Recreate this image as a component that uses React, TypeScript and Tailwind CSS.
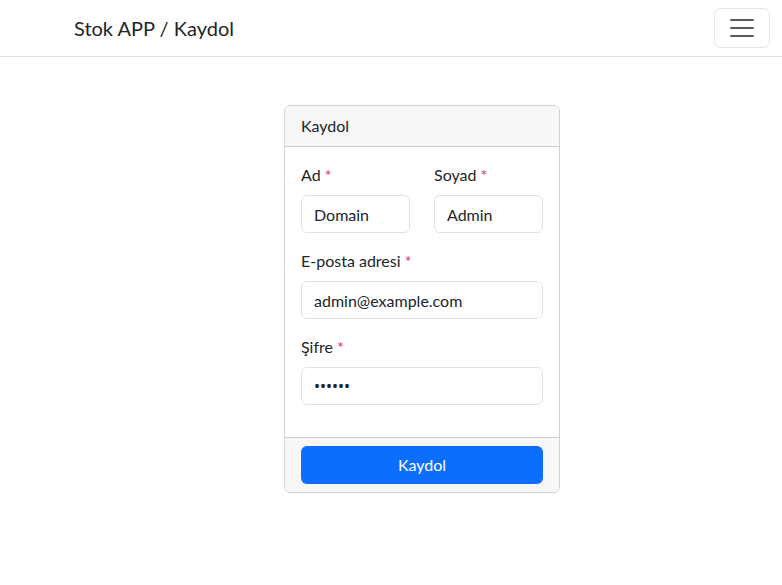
import React from "react";

function Label({ text }: { text: string }) {
  return (
    <label className="mb-2 block leading-6 text-[16px] text-[#212529]">
      {text} <span className="text-[#dc3545]">*</span>
    </label>
  );
}

function Input({ value, type = "text" }: { value: string; type?: string }) {
  return (
    <input
      type={type}
      defaultValue={value}
      className={
        "block h-[38px] w-full rounded-[6px] border border-[#dee2e6] bg-white px-3 text-[16px] text-[#212529] outline-none " +
        (type === "password" ? "font-['Noto_Sans',sans-serif]" : "")
      }
    />
  );
}

export default function App() {
  return (
    <div
      className="min-h-[585px] bg-white text-[#212529]"
      style={{ fontFamily: 'Lato, "Noto Sans", sans-serif' }}
    >
      <nav className="flex h-[57px] items-center justify-between border-b border-[#dee2e6] pl-[74px] pr-3">
        <span className="text-[20px] leading-[30px] text-[#212529]">Stok APP / Kaydol</span>
        <button className="flex h-[40px] w-[56px] items-center justify-center rounded-[6px] border border-[rgba(0,0,0,0.1)]">
          <svg width="30" height="30" viewBox="0 0 30 30">
            <path
              d="M4 7h22M4 15h22M4 23h22"
              stroke="rgba(33,37,41,0.75)"
              strokeWidth="2"
              strokeLinecap="round"
            />
          </svg>
        </button>
      </nav>
      <div className="ml-[284px] mt-[48px] w-[276px] overflow-hidden rounded-[6px] border border-[rgba(0,0,0,0.175)]">
        <div className="h-[41px] border-b border-[rgba(0,0,0,0.175)] bg-[#f7f7f7] px-4 leading-[40px] text-[16px]">
          Kaydol
        </div>
        <div className="p-4">
          <div className="mb-4 grid grid-cols-2 gap-6">
            <div>
              <Label text="Ad" />
              <Input value="Domain" />
            </div>
            <div>
              <Label text="Soyad" />
              <Input value="Admin" />
            </div>
          </div>
          <div className="mb-4">
            <Label text="E-posta adresi" />
            <Input value="admin@example.com" type="email" />
          </div>
          <div className="mb-4">
            <Label text="Şifre" />
            <Input value="123456" type="password" />
          </div>
        </div>
        <div className="border-t border-[rgba(0,0,0,0.175)] bg-[#f7f7f7] px-4 py-2">
          <button className="block h-[38px] w-full rounded-[6px] bg-[#0d6efd] text-[16px] text-white">
            Kaydol
          </button>
        </div>
      </div>
    </div>
  );
}
